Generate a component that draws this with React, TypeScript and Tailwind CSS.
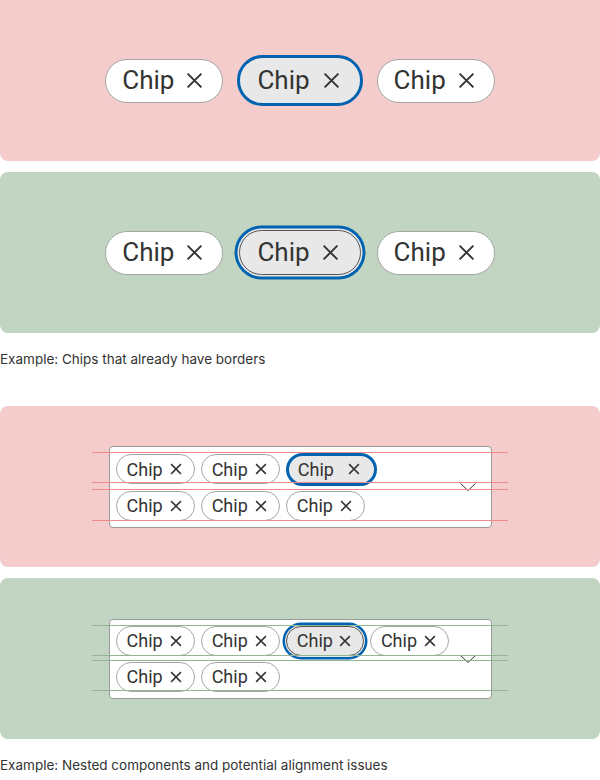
import React from "react";

function Cross({ size, stroke }: { size: number; stroke: number }) {
  return (
    <svg width={size} height={size} viewBox="0 0 16 16" className="shrink-0">
      <path d="M1.5 1.5L14.5 14.5M14.5 1.5L1.5 14.5" stroke="#333" strokeWidth={stroke} strokeLinecap="butt" />
    </svg>
  );
}

function BigChip({ variant = "plain" }: { variant?: "plain" | "solid" | "ring" }) {
  if (variant === "solid") {
    return (
      <div className="flex h-[51px] items-center gap-[13px] rounded-full border-[3px] border-[#0063b1] bg-[#e8e8e8] pl-[17px] pr-[20px] text-[26px] text-[#333]">
        <span>Chip</span>
        <Cross size={17} stroke={1.8} />
      </div>
    );
  }
  if (variant === "ring") {
    return (
      <div className="flex h-[45px] items-center gap-[12px] rounded-full border-[1.5px] border-[#555] bg-[#e8e8e8] pl-[17px] pr-[21px] text-[26px] text-[#333] ring-[3px] ring-[#0063b1] ring-offset-[1.5px] ring-offset-[#e8e8e8]">
        <span>Chip</span>
        <Cross size={17} stroke={1.8} />
      </div>
    );
  }
  return (
    <div className="flex h-[44px] items-center gap-[12px] rounded-full border-[1.5px] border-[#a6a6a6] bg-white pl-[16px] pr-[19px] text-[26px] text-[#333]">
      <span>Chip</span>
      <Cross size={17} stroke={1.8} />
    </div>
  );
}

function SmallChip({ variant = "plain" }: { variant?: "plain" | "solid" | "ring" }) {
  if (variant === "solid") {
    return (
      <div className="flex h-[33px] items-center gap-[14px] rounded-full border-[3px] border-[#0063b1] bg-[#e8e8e8] pl-[9px] pr-[14px] text-[18px] text-[#333]">
        <span>Chip</span>
        <Cross size={12} stroke={2} />
      </div>
    );
  }
  if (variant === "ring") {
    return (
      <div className="flex h-[30px] items-center gap-[6px] rounded-full border border-[#555] bg-[#e8e8e8] pl-[10px] pr-[12px] text-[18px] text-[#333] ring-[2.5px] ring-[#0063b1] ring-offset-[1px] ring-offset-[#e8e8e8]">
        <span>Chip</span>
        <Cross size={12} stroke={2} />
      </div>
    );
  }
  return (
    <div className="flex h-[30px] items-center gap-[7px] rounded-full border border-[#a6a6a6] bg-white pl-[10px] pr-[12px] text-[18px] text-[#333]">
      <span>Chip</span>
      <Cross size={12} stroke={2} />
    </div>
  );
}

function Chevron() {
  return (
    <svg width="16" height="8" viewBox="0 0 16 8" className="shrink-0">
      <path d="M0.5 0.5L8 7.5L15.5 0.5" fill="none" stroke="#333" strokeWidth="1" />
    </svg>
  );
}

function Guides({ ys, color }: { ys: number[]; color: string }) {
  return (
    <>
      {ys.map((y) => (
        <div
          key={y}
          className={"pointer-events-none absolute left-[92px] h-px w-[416px] " + color}
          style={{ top: y }}
        />
      ))}
    </>
  );
}

function Caption({ children }: { children: React.ReactNode }) {
  return (
    <div className="h-[73px] pt-[17px] font-['Inter',sans-serif] text-[13.5px] leading-[18px] text-[#333]">
      {children}
    </div>
  );
}

export default function App() {
  return (
    <div className="flex w-[600px] flex-col bg-white font-['Roboto',sans-serif]">
      <div className="flex h-[161px] items-center justify-center gap-[14px] rounded-b-lg bg-[#f4cccc]">
        <BigChip />
        <BigChip variant="solid" />
        <BigChip />
      </div>
      <div className="mt-[11px] flex h-[161px] items-center justify-center gap-[16px] rounded-lg bg-[#c2d5c2]">
        <BigChip />
        <BigChip variant="ring" />
        <BigChip />
      </div>
      <Caption>Example: Chips that already have borders</Caption>

      <div className="relative flex h-[161px] items-center justify-center rounded-lg bg-[#f4cccc]">
        <div className="flex h-[82px] w-[383px] items-center justify-between rounded-[4px] border border-[#9a9a9a] bg-white pl-[6px] pr-[15px]">
          <div className="flex flex-col gap-[5px]">
            <div className="flex items-center gap-[6px]">
              <SmallChip />
              <SmallChip />
              <SmallChip variant="solid" />
            </div>
            <div className="flex items-center gap-[6px]">
              <SmallChip />
              <SmallChip />
              <SmallChip />
            </div>
          </div>
          <Chevron />
        </div>
        <Guides ys={[46, 76, 83, 114]} color="bg-[#f08a8a]" />
      </div>

      <div className="relative mt-[11px] flex h-[161px] items-center justify-center rounded-lg bg-[#c2d5c2]">
        <div className="flex h-[80px] w-[383px] items-center justify-between rounded-[4px] border border-[#9a9a9a] bg-white pl-[6px] pr-[15px]">
          <div className="flex flex-col gap-[6px]">
            <div className="flex items-center gap-[6px]">
              <SmallChip />
              <SmallChip />
              <SmallChip variant="ring" />
              <SmallChip />
            </div>
            <div className="flex items-center gap-[6px]">
              <SmallChip />
              <SmallChip />
            </div>
          </div>
          <Chevron />
        </div>
        <Guides ys={[47, 77, 82, 112]} color="bg-[#93b592]" />
      </div>
      <Caption>Example: Nested components and potential alignment issues</Caption>
    </div>
  );
}
